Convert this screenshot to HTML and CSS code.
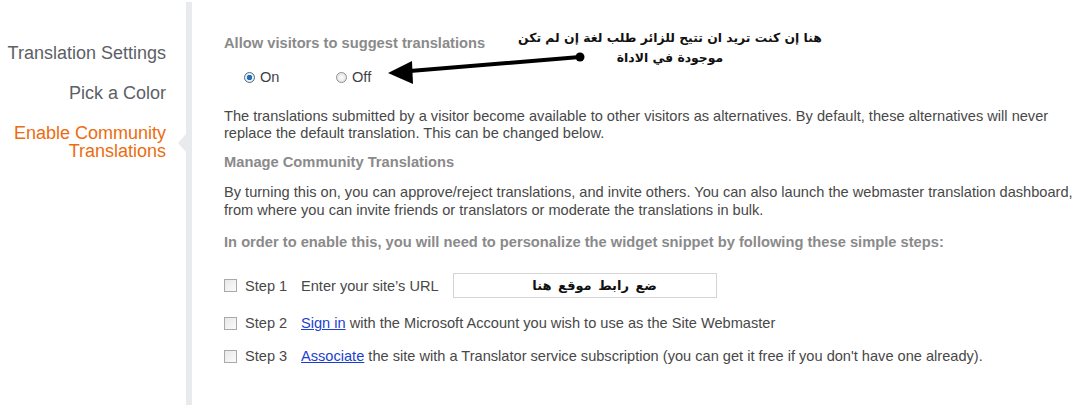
FILE: index.html
```html
<!DOCTYPE html>
<html lang="en">
<head>
<meta charset="utf-8">
<title>Translator widget settings</title>
<link rel="stylesheet" href="styles.css">
</head>
<body>
<div class="page">
  <nav class="sidebar">
    <div class="nav-item">Translation Settings</div>
    <div class="nav-item">Pick a Color</div>
    <div class="nav-item active">Enable Community Translations</div>
  </nav>
  <div class="divider"><span class="pointer"></span></div>
  <main class="main">
    <h3 class="heading first">Allow visitors to suggest translations</h3>
    <div class="radios">
      <label class="radio-opt"><span class="radio checked"></span>On</label>
      <label class="radio-opt"><span class="radio"></span>Off</label>
    </div>
    <p class="para p1">The translations submitted by a visitor become available to other visitors as alternatives. By default, these alternatives will never replace the default translation. This can be changed below.</p>
    <h3 class="heading h2">Manage Community Translations</h3>
    <p class="para p2">By turning this on, you can approve/reject translations, and invite others. You can also launch the webmaster translation dashboard, from where you can invite friends or translators or moderate the translations in bulk.</p>
    <h3 class="heading h3">In order to enable this, you will need to personalize the widget snippet by following these simple steps:</h3>
    <div class="steps">
      <div class="step step1">
        <span class="check"></span>
        <span class="step-label">Step 1</span>
        <span class="step-text">Enter your site’s URL</span>
        <span class="url-box" dir="rtl">ضع رابط موقع هنا</span>
      </div>
      <div class="step step2">
        <span class="check"></span>
        <span class="step-label">Step 2</span>
        <span class="step-text"><a href="#">Sign in</a> with the Microsoft Account you wish to use as the Site Webmaster</span>
      </div>
      <div class="step step3">
        <span class="check"></span>
        <span class="step-label">Step 3</span>
        <span class="step-text"><a href="#">Associate</a> the site with a Translator service subscription (you can get it free if you don't have one already).</span>
      </div>
    </div>
  </main>
</div>
<div class="note" dir="rtl">هنا إن كنت تريد ان تتيح للزائر طلب لغة إن لم تكن<br>موجودة في الاداة</div>
<svg class="arrow" width="220" height="40" viewBox="380 50 220 40" aria-hidden="true">
  <line x1="410" y1="71" x2="580" y2="57" stroke="#000" stroke-width="4" stroke-linecap="round"/>
  <polygon points="388,73 412,61 413,84" fill="#000"/>
  <circle cx="580" cy="57" r="4.5" fill="#000"/>
</svg>
</body>
</html>
```
FILE: styles.css
```css
html, body {
  margin: 0;
  padding: 0;
  background: #fff;
}
body {
  font-family: "Liberation Sans", Arial, sans-serif;
  color: #484848;
  width: 1080px;
  height: 415px;
  overflow: hidden;
  position: relative;
}
.page {
  display: flex;
  align-items: flex-start;
}
.sidebar {
  width: 166px;
  padding-top: 44px;
  text-align: right;
  font-size: 18px;
  line-height: 18px;
}
.nav-item {
  color: #5d6066;
  margin-bottom: 22px;
}
.nav-item.active {
  color: #ec6c0f;
  padding-left: 10px;
}
.divider {
  position: relative;
  width: 6px;
  height: 403px;
  margin-top: 2px;
  margin-left: 20px;
  background: #e9eaed;
}
.pointer {
  position: absolute;
  left: -8px;
  top: 132px;
  width: 0;
  height: 0;
  border-top: 9px solid transparent;
  border-bottom: 9px solid transparent;
  border-right: 8px solid #e9eaed;
}
.main {
  padding-left: 32px;
  padding-top: 35px;
  flex: 1;
  font-size: 14.6px;
}
.heading {
  margin: 0;
  font-size: 14.7px;
  font-weight: bold;
  color: #8a8a8a;
  line-height: 17px;
}
.radios {
  display: flex;
  margin: 16px 0 0 20px;
  height: 18px;
  align-items: center;
}
.radio-opt {
  display: inline-flex;
  align-items: center;
  width: 92px;
  font-size: 14.6px;
  color: #3f3f4a;
}
.radio {
  width: 11px;
  height: 11px;
  border-radius: 50%;
  border: 1px solid #8f8f8f;
  background: radial-gradient(circle, #fdfdfd 0, #dcdcdc 100%);
  margin-right: 5px;
  box-sizing: border-box;
}
.radio.checked {
  border-color: #4c6c8c;
  background: radial-gradient(circle, #1d6fb8 0, #1d6fb8 2.5px, #f3f3f3 3px, #d9d9d9 100%);
}
.para {
  margin: 0;
  line-height: 18px;
}
.p1 { margin-top: 22px; line-height: 17px; }
.h2 { margin-top: 12px; }
.p2 { margin-top: 12px; }
.h3 { margin-top: 15px; }
.steps {
  margin-top: 22px;
}
.step {
  display: flex;
  align-items: center;
  height: 20px;
}
.step1 {
  height: 25px;
  margin-bottom: 15px;
}
.step2 {
  margin-bottom: 13px;
}
.check {
  width: 13px;
  height: 13px;
  border: 1px solid #a9a9a9;
  box-sizing: border-box;
  background: linear-gradient(135deg, #e8e8e8, #fbfbfb);
  margin-right: 8px;
}
.step-label {
  width: 56px;
}
.step-text a {
  color: #1a3fd0;
}
.url-box {
  margin-left: 14px;
  width: 264px;
  height: 25px;
  box-sizing: border-box;
  border: 1px solid #d4d4d4;
  display: flex;
  align-items: center;
  justify-content: center;
  padding-left: 20px;
  font-family: "DejaVu Sans", sans-serif;
  font-weight: bold;
  font-size: 13px;
  word-spacing: 2px;
  color: #111;
}
.note {
  position: absolute;
  left: 510px;
  top: 28px;
  width: 320px;
  text-align: center;
  font-family: "DejaVu Sans", sans-serif;
  font-weight: bold;
  font-size: 12.4px;
  line-height: 20px;
  color: #111;
}
.arrow {
  position: absolute;
  left: 380px;
  top: 50px;
}
```
